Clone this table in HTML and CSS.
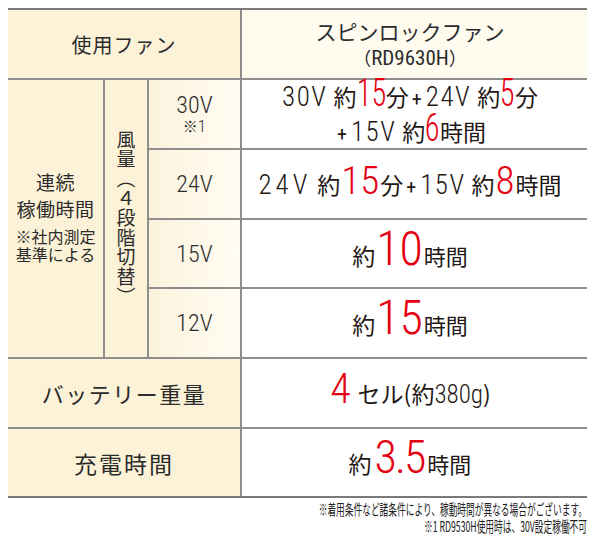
FILE: index.html
```html
<!DOCTYPE html>
<html lang="ja">
<head>
<meta charset="utf-8">
<title>スピンロックファン 仕様</title>
<link rel="stylesheet" href="styles.css">
</head>
<body>
<div class="sheet">
  <div class="spec">
    <div class="cell label head-l">使用ファン</div>
    <div class="cell head-r">
      <div class="fan-name">スピンロックファン</div>
      <div class="model">（<span class="n">RD9630H</span>）</div>
    </div>

    <div class="cell label run">
      <div class="run-title">連続<br>稼働時間</div>
      <div class="run-note">※社内測定<br>基準による</div>
    </div>
    <div class="cell label mode"><span class="vert">風量（４段階切替）</span></div>

    <div class="cell volt"><span class="v">30V</span><span class="v-note">※<span class="n">1</span></span></div>
    <div class="cell val">
      <div class="line"><span class="b sp">30V</span><span class="k">約</span><span class="r sq r2 s38">15</span><span class="k">分</span><span class="plus">+</span><span class="b sp">24V</span><span class="k">約</span><span class="r sq r1 s38">5</span><span class="k">分</span></div>
      <div class="line"><span class="plus">+</span><span class="b sp">15V</span><span class="k">約</span><span class="r sq r1 s38">6</span><span class="k">時間</span></div>
    </div>

    <div class="cell volt"><span class="v">24V</span></div>
    <div class="cell val">
      <div class="line"><span class="b sp wide">24V</span><span class="k">約</span><span class="r s39">15</span><span class="k">分</span><span class="plus">+</span><span class="b sp">15V</span><span class="k">約</span><span class="r s39">8</span><span class="k">時間</span></div>
    </div>

    <div class="cell volt"><span class="v">15V</span></div>
    <div class="cell val">
      <div class="line big"><span class="k">約</span><span class="r s48">10</span><span class="k k2">時間</span></div>
    </div>

    <div class="cell volt"><span class="v">12V</span></div>
    <div class="cell val">
      <div class="line big"><span class="k">約</span><span class="r s48">15</span><span class="k k2">時間</span></div>
    </div>

    <div class="cell label wide-label">バッテリー重量</div>
    <div class="cell val">
      <div class="line big"><span class="r s42">4</span><span class="k cell-word">セル(約</span><span class="b b25">380g</span><span class="k">)</span></div>
    </div>

    <div class="cell label wide-label charge">充電時間</div>
    <div class="cell val">
      <div class="line big"><span class="k">約</span><span class="r s46 gap">3.5</span><span class="k k2">時間</span></div>
    </div>
  </div>

  <div class="notes">
    <p>※着用条件など諸条件により、稼動時間が異なる場合がございます。</p>
    <p>※1 RD9530H使用時は、30V設定稼働不可</p>
  </div>
</div>
</body>
</html>
```

FILE: styles.css
```css
* {
  box-sizing: border-box;
  margin: 0;
  padding: 0;
}

html,
body {
  background: #ffffff;
}

body {
  width: 600px;
  padding: 8px 13px 0 8px;
  font-family: "Noto Sans CJK JP", "Noto Sans", sans-serif;
  color: #231815;
}

.spec {
  display: grid;
  width: 579px;
  grid-template-columns: 95px 42px 91px 345px;
  grid-template-rows: 68px 68px 68px 67px 68px 68px 67px;
  gap: 2px;
  background: #8e8e8e;
  border-top: 2px solid #7a7a7a;
  border-bottom: 2px solid #7a7a7a;
}

.cell {
  display: flex;
  flex-direction: column;
  align-items: center;
  justify-content: center;
  text-align: center;
  white-space: nowrap;
}

.label {
  background: #fcf2d8;
}

.head-l {
  grid-column: 1 / 4;
  font-size: 20px;
  letter-spacing: 1px;
  color: #2b2b2b;
}

.head-r {
  background: #fffbee;
  padding-right: 9px;
  color: #2b2b2b;
}

.fan-name {
  font-size: 21px;
  line-height: 26px;
}

.model {
  font-size: 18px;
  line-height: 26px;
  color: #2b2b2b;
}

.model .n {
  font-size: 21px;
  font-weight: 400;
}

.n,
.b,
.v,
.r,
.plus {
  font-family: "Roboto Condensed", "Liberation Sans Narrow", "Roboto", sans-serif;
}

.n {
  font-weight: 300;
}

.run {
  grid-row: span 4;
  padding-bottom: 6px;
  color: #2b2b2b;
}

.run-title {
  font-size: 19px;
  line-height: 27px;
  letter-spacing: 0.5px;
  margin-bottom: 5px;
}

.run-note {
  font-size: 16px;
  line-height: 18px;
}

.mode {
  grid-row: span 4;
}

.vert {
  writing-mode: vertical-rl;
  font-size: 19px;
  line-height: 1;
  letter-spacing: 0.6px;
  color: #2b2b2b;
}

.volt {
  background: linear-gradient(to right, #fcf3dd, #fffcf3);
  color: #2b2b2b;
}

.v {
  font-size: 24px;
  font-weight: 300;
  line-height: 24px;
}

.v-note {
  font-size: 15px;
  line-height: 18px;
}

.v-note .n {
  font-size: 17px;
}

.val {
  background: #ffffff;
  padding-right: 9px;
}

.line {
  line-height: 29px;
  display: flex;
  align-items: baseline;
  justify-content: center;
}

.big {
  margin-top: -4px;
}

.k {
  font-size: 23px;
}

.k2 {
  font-size: 22px;
}

.b {
  font-size: 27px;
  font-weight: 300;
}

.sp {
  letter-spacing: 1.5px;
  margin-right: 6px;
}

.wide {
  letter-spacing: 4px;
}

.b25 {
  font-size: 25px;
  letter-spacing: 0;
}

.plus {
  font-size: 20px;
  font-weight: 400;
  margin: 0 4px 0 3px;
}

.r {
  display: inline-block;
  color: #e50012;
  font-weight: 300;
  margin: 0 1px;
}

.sq {
  transform: scaleX(0.8);
}

.r1 {
  margin: 0 -0.05em;
}

.r2 {
  margin: 0 -0.1em;
}

.gap {
  margin: 0 3px 0 3px;
  letter-spacing: -2px;
}

.s38 { font-size: 38px; }
.s39 { font-size: 39px; }
.s42 { font-size: 42px; }
.s46 { font-size: 46px; }
.s48 { font-size: 48px; }

.cell-word {
  margin-left: 6px;
}

.wide-label {
  grid-column: 1 / 4;
  font-size: 22px;
  letter-spacing: 1.5px;
  color: #2b2b2b;
}

.charge {
  font-size: 23px;
  letter-spacing: 2px;
}

.notes {
  width: 579px;
  padding-top: 2px;
}

.notes p {
  font-size: 15px;
  line-height: 17px;
  text-align: right;
  transform: scaleX(0.58);
  transform-origin: right center;
  color: #222;
}
```
